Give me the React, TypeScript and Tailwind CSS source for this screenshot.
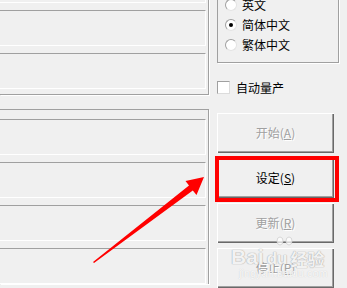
const fieldCls =
    "h-[36px] shrink-0 border-t border-r border-b border-t-[#a0a0a0] border-r-white border-b-white"

const Radio = ({label, checked}: { label: string; checked?: boolean }) => (
    <div className="flex items-center h-[20px] pl-[7px] gap-[5px]">
        <span
            className="w-[12px] h-[12px] rounded-full bg-white border border-t-[#a0a0a0] border-l-[#a0a0a0] border-r-[#e3e3e3] border-b-[#e3e3e3] flex items-center justify-center">
            {checked && <span className="w-[4px] h-[4px] rounded-full bg-black"></span>}
        </span>
        <span className="leading-none">{label}</span>
    </div>
)

const Btn = ({text, hot, active}: { text: string; hot: string; active?: boolean }) => (
    <div
        className={
            active
                ? "h-[40px] w-[117px] flex items-center justify-center bg-[#f0f0f0] text-black shadow-[inset_1px_1px_0_#fff,inset_-1px_-1px_0_#696969,inset_-2px_-2px_0_#a0a0a0]"
                : "h-[40px] w-[117px] flex items-center justify-center bg-[#f0f0f0] text-[#a0a0a0] [text-shadow:1px_1px_0_#fff] shadow-[inset_1px_1px_0_#fff,inset_-1px_-1px_0_#696969,inset_-2px_-2px_0_#a0a0a0]"
        }>
        <span className="leading-none">
            {text}(<span className="underline underline-offset-1">{hot}</span>)
        </span>
    </div>
)

export default function App() {
    return (
        <div
            className="relative w-[347px] h-[288px] overflow-hidden bg-[#f0f0f0] flex font-['Noto_Sans_CJK_SC','Liberation_Sans',sans-serif] text-[12px] text-black">
            {/* left fields */}
            <div className="w-[209px] shrink-0 flex flex-col">
                <div
                    className="-mt-[33px] w-[209px] border-r border-b border-[#a0a0a0] shadow-[1px_1px_0_#fff] pr-[2px] pb-[5px] flex flex-col gap-[7px]">
                    <div className={fieldCls}></div>
                    <div className={fieldCls}></div>
                    <div className={fieldCls}></div>
                </div>
                <div
                    className="mt-[14px] w-[209px] border-t border-r border-[#a0a0a0] shadow-[1px_1px_0_#fff] pr-[2px] pt-[9px] flex flex-col gap-[7px]">
                    <div className={fieldCls}></div>
                    <div className={fieldCls}></div>
                    <div className={fieldCls}></div>
                    <div className={fieldCls}></div>
                </div>
            </div>

            {/* right side */}
            <div className="flex-1 flex flex-col pl-[8px]">
                <div
                    className="-mt-[20px] w-[122px] h-[83px] border border-[#a0a0a0] shadow-[1px_1px_0_#fff] pt-[14px]">
                    <Radio label="英文"/>
                    <Radio label="简体中文" checked/>
                    <Radio label="繁体中文"/>
                </div>
                <div className="mt-[18px] flex items-center gap-[6px] h-[13px]">
                    <span
                        className="w-[13px] h-[13px] bg-white border border-t-[#a0a0a0] border-l-[#a0a0a0] border-r-[#dcdcdc] border-b-[#dcdcdc]"></span>
                    <span className="leading-none">自动量产</span>
                </div>
                <div className="mt-[19px] flex flex-col gap-[5px]">
                    <Btn text="开始" hot="A"/>
                    <Btn text="设定" hot="S" active/>
                    <Btn text="更新" hot="R"/>
                    <Btn text="停止" hot="P"/>
                </div>
            </div>

            {/* annotation: red box */}
            <div className="absolute left-[215px] top-[156px] w-[124px] h-[46px] border-4 border-[#ff0000]"></div>

            {/* annotation: arrow */}
            <svg className="absolute left-0 top-0" width="347" height="288" viewBox="0 0 347 288">
                <polygon
                    points="93,262 189,185.5 185.5,181 204,177 196.5,195 192.8,190.4 94,263"
                    fill="#ff0000"/>
            </svg>

            {/* watermark */}
            <div className="absolute left-[231px] top-[246px] text-white/85 pointer-events-none">
                <svg className="absolute left-[40px] top-[-14px]" width="28" height="16" viewBox="0 0 28 16">
                    <g fill="#ffffff" fillOpacity="0.7" stroke="#cfcfcf" strokeWidth="0.8">
                        <ellipse cx="9" cy="9" rx="3" ry="4"/>
                        <ellipse cx="18" cy="9" rx="3" ry="4"/>
                    </g>
                </svg>
                <div
                    className="flex items-end gap-[3px] font-['Liberation_Sans',sans-serif] font-bold text-[21px] leading-none [text-shadow:0_0_1px_#a8a8a8,0_0_1px_#a8a8a8]">
                    <span>Bai</span>
                    <span className="text-[17px]">du</span>
                    <span className="font-['Noto_Sans_CJK_SC',sans-serif] text-[17px]">经验</span>
                </div>
                <div
                    className="mt-[1px] ml-[8px] font-['Liberation_Sans',sans-serif] text-[11px] leading-none [text-shadow:0_0_1px_#c0c0c0]">jingyan.baidu.com
                </div>
            </div>
        </div>
    )
}
